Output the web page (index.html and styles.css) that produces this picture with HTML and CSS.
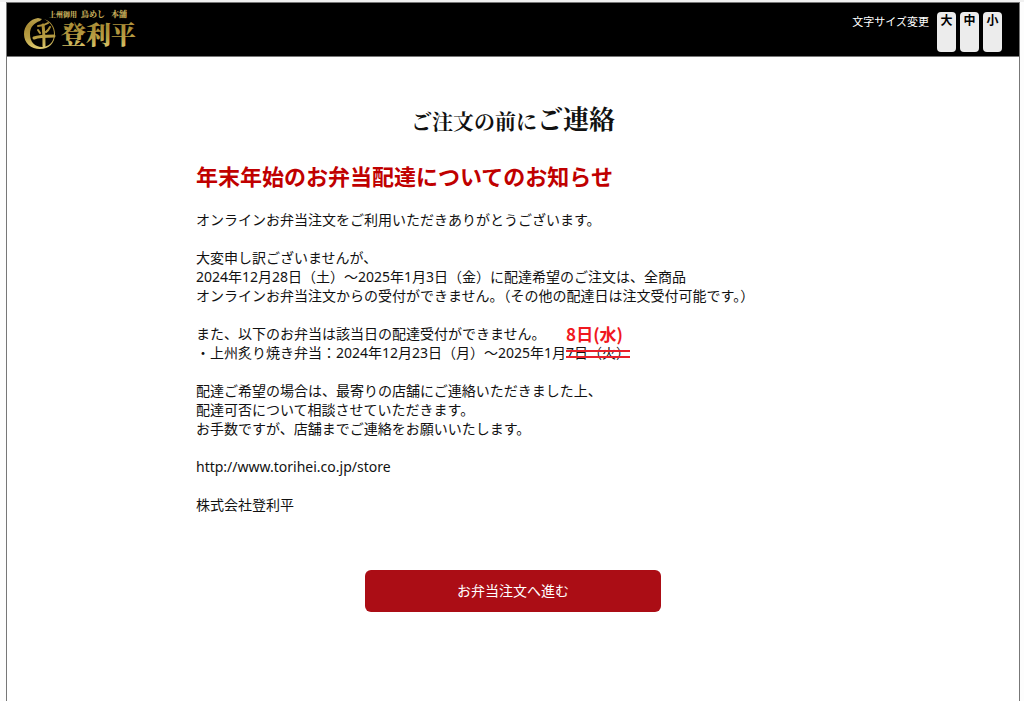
FILE: index.html
```html
<!DOCTYPE html>
<html lang="ja">
<head>
<meta charset="utf-8">
<meta name="viewport" content="width=device-width, initial-scale=1">
<title>ご注文の前にご連絡 | 登利平</title>
<link rel="stylesheet" href="styles.css">
</head>
<body>
<div class="page">
  <header class="site-header">
    <a class="logo" href="#" aria-label="登利平">
      <svg class="logo-art" viewBox="0 0 116 46" width="116" height="46" aria-hidden="true">
        <defs>
          <linearGradient id="gold" gradientUnits="userSpaceOnUse" x1="0" y1="8" x2="0" y2="46">
            <stop offset="0" stop-color="#c4ad5a"/>
            <stop offset="0.3" stop-color="#a98c34"/>
            <stop offset="0.6" stop-color="#b9a045"/>
            <stop offset="1" stop-color="#eedb80"/>
          </linearGradient>
        </defs>
        <g fill="url(#gold)">
          <text class="logo-sub" x="25" y="10">上州御用</text>
          <text class="logo-mid" x="57" y="10">鳥めし</text>
          <text class="logo-mid" x="87" y="10">本舗</text>
          <text class="logo-name" x="37 62 87" y="37">登利平</text>
          <path d="M14 11C6 12 0 19 0 27c0 9 7 15 16 15s15-6 15-15c0-7-4-13-11-15 6 3 10 8 10 15 0 8-5 13-12 13S6 35 6 27c0-7 4-11 10-13l2-2Z"/>
        </g>
        <g fill="none" stroke="url(#gold)" stroke-linecap="round" stroke-linejoin="round">
          <path d="M14 19c4 0 7-1 10-3" stroke-width="2"/>
          <path d="M14 23l2 3M26 20c-1 2-2 4-4 5" stroke-width="2"/>
          <path d="M10 31c5-2 12-2 20-2" stroke-width="3"/>
          <path d="M19 18c1 7 1 14 1 21" stroke-width="3"/>
        </g>
      </svg>
    </a>
    <div class="text-size" role="group" aria-labelledby="size-label">
      <span class="size-label" id="size-label">文字サイズ変更</span>
      <button class="size-button" type="button">大</button>
      <button class="size-button" type="button">中</button>
      <button class="size-button" type="button">小</button>
    </div>
  </header>
  <main class="content">
    <h1 class="page-title">ご注文の前に<span class="title-large">ご連絡</span></h1>
    <article class="notice">
      <h2 class="notice-title">年末年始のお弁当配達についてのお知らせ</h2>
      <p>オンラインお弁当注文をご利用いただきありがとうございます。</p>
      <p>大変申し訳ございませんが、<br>2024年12月28日（土）～2025年1月3日（金）に配達希望のご注文は、全商品<br>オンラインお弁当注文からの受付ができません。（その他の配達日は注文受付可能です。）</p>
      <p>また、以下のお弁当は該当日の配達受付ができません。<br>・上州炙り焼き弁当：2024年12月23日（月）～2025年1月<span class="revision"><del class="old-date">7日（火）</del><ins class="new-date">8日(水)</ins></span></p>
      <p>配達ご希望の場合は、最寄りの店舗にご連絡いただきました上、<br>配達可否について相談させていただきます。<br>お手数ですが、店舗までご連絡をお願いいたします。</p>
      <p><a class="store-link" href="http://www.torihei.co.jp/store">http://www.torihei.co.jp/store</a></p>
      <p>株式会社登利平</p>
    </article>
    <button class="proceed" type="button">お弁当注文へ進む</button>
  </main>
</div>
</body>
</html>
```

FILE: styles.css
```css
* {
  box-sizing: border-box;
}

body {
  margin: 0;
  padding: 2px 4px 0 6px;
  background: linear-gradient(#f0f0f0 2px, #fdfdfd 2px);
  color: #111;
  font-family: "Noto Sans", "Noto Sans CJK JP", sans-serif;
  font-size: 14px;
  line-height: 19px;
}

.page {
  min-height: calc(100vh - 2px);
  border: 1px solid #777;
  border-bottom: 0;
  background: #fff;
}

.site-header {
  display: flex;
  justify-content: space-between;
  align-items: flex-start;
  min-height: 54px;
  padding: 4px 17px 0;
  border-bottom: 1px solid #777;
  background: #000;
}

.logo,
.logo-art {
  display: block;
}

.logo-art {
  overflow: visible;
}

.logo-art text {
  font-family: "Noto Serif CJK JP", "Noto Sans CJK JP", serif;
  font-weight: 900;
}

.logo-sub {
  font-size: 7px;
}

.logo-mid {
  font-size: 8px;
}

.logo-name {
  font-size: 25px;
}

.text-size {
  display: flex;
  align-items: flex-start;
  gap: 4px;
  padding-top: 5px;
}

.size-label {
  margin-right: 4px;
  color: #fff;
  font-size: 11px;
}

.size-button {
  display: flex;
  justify-content: center;
  align-items: flex-start;
  width: 19px;
  height: 40px;
  padding: 0;
  border: 0;
  border-radius: 4px;
  background: #ececec;
  color: #000;
  font: bold 12px/16px "Noto Sans CJK JP", sans-serif;
}

.content {
  display: flex;
  flex-direction: column;
  align-items: center;
  padding: 43px 20px;
}

.page-title {
  margin: 0;
  font: bold 21px/36px "Noto Serif CJK JP", "Noto Sans CJK JP", serif;
}

.title-large {
  font-size: 26px;
}

.notice {
  width: 100%;
  max-width: 634px;
  margin-bottom: 37px;
}

.notice-title {
  margin: 22px 0 18px;
  color: #c00000;
  font-size: 22px;
  line-height: 32px;
}

.notice p {
  margin: 0 0 19px;
}

.store-link {
  color: inherit;
  text-decoration: none;
}

.revision {
  position: relative;
  display: inline-block;
}

.old-date {
  text-decoration: none;
}

.old-date::after {
  content: "";
  position: absolute;
  top: 7px;
  left: 0;
  right: 0;
  height: 4px;
  border: solid #e8202a;
  border-width: 2px 0;
}

.new-date {
  position: absolute;
  bottom: 100%;
  left: 0;
  color: #f01820;
  font: bold 17px/19px "Noto Sans CJK JP", sans-serif;
  text-decoration: none;
  white-space: nowrap;
}

.proceed {
  width: 296px;
  max-width: 100%;
  padding: 11px 16px 12px;
  border: 0;
  border-radius: 6px;
  background: #ab0d15;
  color: #fff;
  font: inherit;
}
```
